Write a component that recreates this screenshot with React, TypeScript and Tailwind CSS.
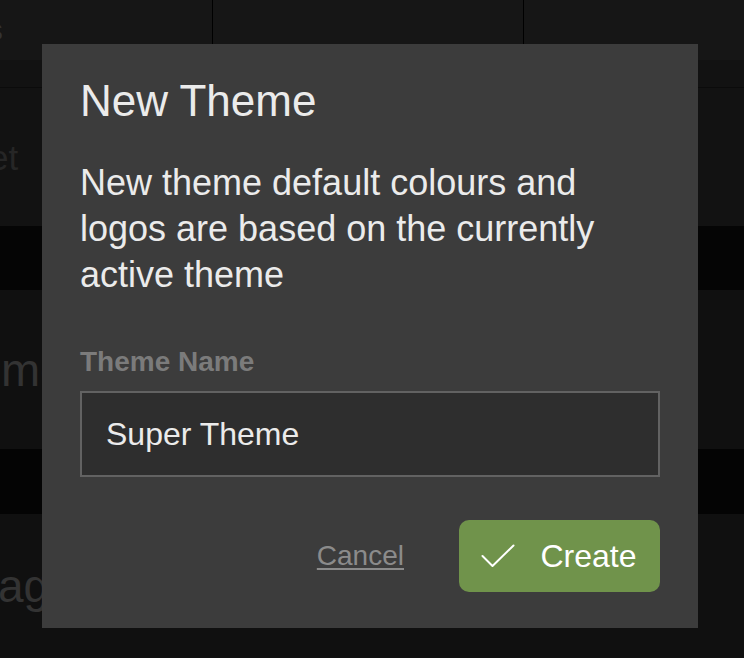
import React from "react";

const font = { fontFamily: '"Liberation Sans", Arial, Helvetica, sans-serif' };

export default function App() {
  return (
    <div
      className="relative h-[658px] w-[744px] overflow-hidden bg-[#111111]"
      style={font}
    >
      {/* Background app (dimmed) */}
      <div className="flex h-[60px] bg-[#161616]">
        <div className="flex w-[213px] items-center overflow-hidden border-r border-black">
          <span className="ml-[-102px] whitespace-nowrap text-[29px] leading-none text-[#333333]">
            Themes
          </span>
        </div>
        <div className="w-[311px] border-r border-black" />
        <div className="flex-1" />
      </div>
      <div className="h-[28px] border-b border-[#0b0b0b] bg-[#121212]" />
      <div className="flex h-[138px] items-center overflow-hidden bg-[#121212]">
        <span className="ml-[-11px] whitespace-nowrap text-[35px] leading-none text-[#262626]">
          et
        </span>
      </div>
      <div className="h-[64px] bg-[#050505]" />
      <div className="flex h-[159px] items-center overflow-hidden bg-[#101010]">
        <span className="ml-[1px] whitespace-nowrap text-[47px] leading-none text-[#333333]">
          me
        </span>
      </div>
      <div className="h-[65px] bg-[#040404]" />
      <div className="flex h-[143px] items-center overflow-hidden bg-[#101010]">
        <span className="ml-[-2px] whitespace-nowrap text-[46px] leading-none text-[#333333]">
          age
        </span>
      </div>

      {/* Modal */}
      <div className="absolute left-[42px] top-[44px] flex h-[584px] w-[656px] flex-col bg-[#3c3c3c] px-[38px] pt-[32px]">
        <h1 className="text-[44px] font-normal leading-[50px] text-[#ebebeb]">
          New Theme
        </h1>
        <p className="mt-[34px] text-[36px] leading-[46px] text-[#ebebeb]">
          New theme default colours and logos are based on the currently
          active theme
        </p>
        <label className="mt-[48px] text-[28px] font-bold leading-[32px] text-[#7b7b7b]">
          Theme Name
        </label>
        <div className="mt-[13px] flex h-[86px] items-center border-2 border-[#626262] bg-[#2e2e2e] pl-[24px] text-[32px] text-[#ebebeb]">
          Super Theme
        </div>
        <div className="mt-[43px] flex items-center justify-end gap-[55px]">
          <span className="text-[28px] leading-none text-[#8b8b8b] underline underline-offset-[3px]">
            Cancel
          </span>
          <div className="flex h-[72px] w-[201px] items-center justify-center gap-[25px] rounded-[10px] bg-[#70934b]">
            <svg
              width="34"
              height="24"
              viewBox="0 0 34 24"
              fill="none"
              stroke="white"
              strokeWidth="2"
              strokeLinecap="round"
              strokeLinejoin="round"
              className="ml-[-1px]"
            >
              <path d="M1.5 12 L11.5 22 L32.5 1.5" />
            </svg>
            <span className="text-[32px] leading-none text-white">Create</span>
          </div>
        </div>
      </div>
    </div>
  );
}
